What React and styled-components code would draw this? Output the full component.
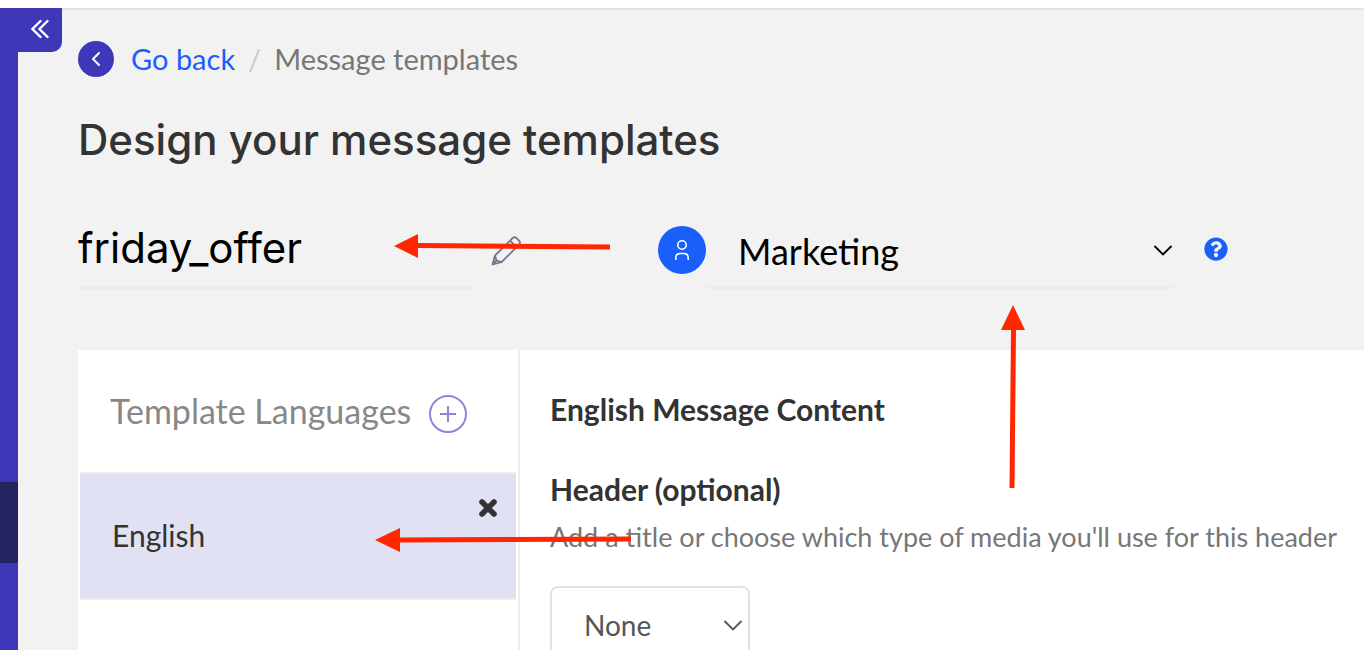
import React, { useState } from 'react';
import styled, { createGlobalStyle } from 'styled-components';
import { FaQuestionCircle } from 'react-icons/fa';

const colors = {
  indigo: '#3e38b8',
  indigoDark: '#252260',
  lavender: '#e1e1f4',
  blue: '#1a5ffa',
  grey: '#f2f2f2',
  line: '#e2e2e2',
  lineLight: '#ededed',
  text: '#333333',
  muted: '#777777',
  red: '#ff2600',
  white: '#ffffff'
};

const fonts = {
  body: 'Lato, "Liberation Sans", sans-serif',
  display: 'Inter, "Liberation Sans", sans-serif'
};

const GlobalStyle = createGlobalStyle`
  * {
    box-sizing: border-box;
  }

  body {
    margin: 0;
    font-family: ${fonts.body};
    color: ${colors.text};
    background-color: ${colors.grey};
  }
`;

const Page = styled.div`
  position: relative;
  display: flex;
  flex-direction: column;
  height: 100vh;
  overflow: hidden;
`;

const TopBar = styled.header`
  flex: none;
  height: 8px;
  background-color: ${colors.white};
`;

const Body = styled.div`
  display: flex;
  flex: 1;
  min-height: 0;
`;

const Rail = styled.nav`
  position: relative;
  flex: none;
  width: 18px;
  padding-top: 474px;
  background-color: ${colors.indigo};
`;

const RailItem = styled.a`
  display: block;
  height: 81px;
  background-color: ${colors.indigoDark};
`;

const RailToggle = styled.button`
  position: absolute;
  top: 0;
  left: 0;
  display: flex;
  align-items: center;
  justify-content: flex-end;
  width: 62px;
  height: 44px;
  padding: 0 13px 2px 0;
  border: 0;
  border-radius: 0 0 10px 0;
  background-color: ${colors.indigo};
  cursor: pointer;
`;

const Main = styled.main`
  display: flex;
  flex: 1;
  flex-direction: column;
  min-width: 0;
  padding: 31px 0 0 60px;
  border-top: 2px solid ${colors.line};
`;

const Breadcrumb = styled.nav`
  display: flex;
  align-items: center;
  height: 36px;
  font-size: 29px;
  line-height: 34px;
  color: ${colors.muted};
`;

const BackButton = styled.button`
  display: flex;
  align-items: center;
  justify-content: center;
  width: 36px;
  height: 36px;
  margin-right: 17px;
  padding: 0;
  border: 0;
  border-radius: 50%;
  background-color: ${colors.indigo};
  cursor: pointer;
`;

const BackLink = styled.a`
  color: ${colors.blue};
  text-decoration: none;
`;

const Separator = styled.span`
  margin: 0 13px;
  color: #cccccc;
`;

const Title = styled.h1`
  margin: 39px 0 62px;
  font-family: ${fonts.display};
  font-size: 42px;
  font-weight: 500;
  line-height: 48px;
`;

const Fields = styled.div`
  display: flex;
  height: 64px;
  margin-bottom: 60px;
`;

const NameInput = styled.input`
  flex: 0 1 394px;
  min-width: 0;
  padding: 0 0 18px;
  border: 0;
  border-bottom: 4px solid ${colors.lineLight};
  font-family: ${fonts.display};
  font-size: 42px;
  color: #000000;
  background: none;
  outline: none;
`;

const EditButton = styled.button`
  flex: none;
  height: 48px;
  margin: 0 136px 0 18px;
  padding: 4px 0 0;
  border: 0;
  background: none;
  cursor: pointer;
`;

const CategoryBadge = styled.span`
  display: flex;
  flex: none;
  align-items: center;
  justify-content: center;
  width: 48px;
  height: 48px;
  border-radius: 50%;
  background-color: ${colors.blue};
`;

const SelectWrapper = styled.div`
  position: relative;
  display: flex;
  width: ${props => props.$width}px;
  max-width: 100%;
  min-width: 0;

  svg {
    position: absolute;
    top: ${props => props.$chevronTop}px;
    right: ${props => props.$chevronRight}px;
    pointer-events: none;
  }
`;

const CategorySelect = styled.select`
  width: 100%;
  padding: 0 40px 10px 32px;
  border: 0;
  border-bottom: 4px solid ${colors.lineLight};
  border-radius: 8px;
  font-family: ${fonts.body};
  font-size: 36px;
  color: #000000;
  background: none;
  appearance: none;
`;

const HelpButton = styled.button`
  display: flex;
  flex: none;
  align-items: center;
  height: 46px;
  margin-left: 28px;
  padding: 0;
  border: 0;
  font-size: 24px;
  color: ${colors.blue};
  background: none;
  cursor: pointer;
`;

const Panel = styled.div`
  display: flex;
  flex: 1;
  background-color: ${colors.white};
`;

const Languages = styled.aside`
  flex: none;
  width: 442px;
  padding: 0 2px;
  border-right: 2px solid ${colors.lineLight};
`;

const LanguagesHeader = styled.div`
  display: flex;
  align-items: center;
  justify-content: space-between;
  height: 122px;
  padding: 6px 49px 0 30px;
`;

const LanguagesTitle = styled.h2`
  margin: 0;
  padding-bottom: 8px;
  font-size: 34px;
  font-weight: 400;
  color: #888888;
`;

const AddButton = styled.button`
  display: flex;
  align-items: center;
  justify-content: center;
  width: 38px;
  height: 38px;
  padding: 0;
  border: 2px solid #8b87d8;
  border-radius: 50%;
  background: none;
  cursor: pointer;
`;

const LanguageItem = styled.div`
  display: flex;
  align-items: center;
  justify-content: space-between;
  height: 128px;
  padding: 0 18px 2px 32px;
  border-top: 2px solid ${colors.lineLight};
  border-bottom: 2px solid ${colors.lineLight};
  font-size: 30px;
  background-color: ${colors.lavender};
`;

const RemoveButton = styled.button`
  align-self: flex-start;
  margin-top: 24px;
  padding: 0;
  border: 0;
  line-height: 0;
  background: none;
  cursor: pointer;
`;

const Content = styled.section`
  flex: 1;
  min-width: 0;
  padding: 39px 26px 0 30px;
`;

const ContentTitle = styled.h2`
  margin: 0 0 40px;
  font-size: 30px;
  font-weight: 700;
  line-height: 40px;
`;

const FieldLabel = styled.label`
  display: block;
  font-size: 30px;
  font-weight: 700;
  line-height: 40px;
`;

const Hint = styled.p`
  margin: 8px 0 29px;
  font-size: 27px;
  line-height: 40px;
  color: ${colors.muted};
  white-space: nowrap;
`;

const HeaderSelect = styled.select`
  width: 100%;
  height: 80px;
  padding: 0 32px 2px;
  border: 2px solid ${colors.line};
  border-radius: 8px;
  font-family: ${fonts.body};
  font-size: 28px;
  color: #555555;
  background: none;
  appearance: none;
`;

const Pointer = styled.svg`
  position: absolute;
  top: ${props => props.$top}px;
  left: ${props => props.$left}px;
  fill: ${colors.red};
  pointer-events: none;
`;

const Chevron = ({ color }) => (
  <svg width="18" height="12" viewBox="0 0 18 12" fill="none" stroke={color}>
    <path d="M1 1.5 9 9.5l8-8" strokeWidth="1.8" strokeLinecap="round" />
  </svg>
);

const App = () => {
  const [name, setName] = useState('friday_offer');

  return (
    <Page>
      <GlobalStyle />
      <TopBar />
      <Body>
        <Rail>
          <RailItem href="#templates" aria-label="Templates" />
          <RailToggle aria-label="Collapse menu">
            <svg width="18" height="20" viewBox="0 0 18 20" fill="none">
              <path
                d="M9.5 2 1.5 10l8 8M16.5 2l-8 8 8 8"
                stroke={colors.white}
                strokeWidth="2.4"
                strokeLinecap="round"
              />
            </svg>
          </RailToggle>
        </Rail>
        <Main>
          <Breadcrumb>
            <BackButton aria-label="Back">
              <svg width="10" height="16" viewBox="0 0 10 16" fill="none">
                <path
                  d="M8 2 2 8l6 6"
                  stroke={colors.white}
                  strokeWidth="2"
                  strokeLinecap="round"
                  strokeLinejoin="round"
                />
              </svg>
            </BackButton>
            <BackLink href="#back">Go back</BackLink>
            <Separator>/</Separator>
            <span>Message templates</span>
          </Breadcrumb>
          <Title>Design your message templates</Title>
          <Fields>
            <NameInput
              aria-label="Template name"
              value={name}
              onChange={e => setName(e.target.value)}
            />
            <EditButton aria-label="Edit name">
              <svg width="32" height="32" viewBox="0 0 32 32" fill="none">
                <path
                  d="M2.5 29.5 5 20.5 22.5 3.2Q24.5 1.2 26.6 3.2L29 5.6Q31 7.7 29 9.7L11.5 27.2ZM5 20.5 6.5 25.5 11.5 27.2M2.5 29.5 6.5 25.5M20 5.7 26.5 12.2"
                  stroke="#77758a"
                  strokeWidth="1.8"
                  strokeLinejoin="round"
                />
              </svg>
            </EditButton>
            <CategoryBadge>
              <svg width="16" height="24" viewBox="0 0 16 24" fill="none">
                <g stroke={colors.white} strokeWidth="1.6">
                  <circle cx="8" cy="7" r="4.2" />
                  <path d="M1.8 22v-2q0-4.5 4.5-4.5h3.4q4.5 0 4.5 4.5v2" />
                </g>
              </svg>
            </CategoryBadge>
            <SelectWrapper $width={470} $chevronTop={19} $chevronRight={4}>
              <CategorySelect aria-label="Category">
                <option>Marketing</option>
              </CategorySelect>
              <Chevron color="#000000" />
            </SelectWrapper>
            <HelpButton aria-label="Help">
              <FaQuestionCircle />
            </HelpButton>
          </Fields>
          <Panel>
            <Languages>
              <LanguagesHeader>
                <LanguagesTitle>Template Languages</LanguagesTitle>
                <AddButton aria-label="Add language">
                  <svg width="16" height="16" viewBox="0 0 16 16">
                    <path d="M8 0v16M0 8h16" stroke="#8b87d8" strokeWidth="2" />
                  </svg>
                </AddButton>
              </LanguagesHeader>
              <LanguageItem>
                <span>English</span>
                <RemoveButton aria-label="Remove English">
                  <svg width="20" height="20" viewBox="0 0 20 20">
                    <path
                      d="m4 4 12 12M16 4 4 16"
                      stroke={colors.text}
                      strokeWidth="5.6"
                      strokeLinecap="round"
                    />
                  </svg>
                </RemoveButton>
              </LanguageItem>
            </Languages>
            <Content>
              <ContentTitle>English Message Content</ContentTitle>
              <FieldLabel htmlFor="header-type">Header (optional)</FieldLabel>
              <Hint>
                Add a title or choose which type of media you'll use for this
                header
              </Hint>
              <SelectWrapper $width={200} $chevronTop={34} $chevronRight={8}>
                <HeaderSelect id="header-type">
                  <option>None</option>
                </HeaderSelect>
                <Chevron color="#555555" />
              </SelectWrapper>
            </Content>
          </Panel>
        </Main>
      </Body>
      <Pointer $top={234} $left={394} width="218" height="26">
        <path d="M0 12 24 0V9L216 10.5V15.5L24 14V24Z" />
      </Pointer>
      <Pointer $top={305} $left={1000} width="26" height="184">
        <path d="M13 0 25 25H16L14.5 183H9.5L11 25H1Z" />
      </Pointer>
      <Pointer $top={527} $left={375} width="258" height="26">
        <path d="M0 13 25 1V10.5L256 9.5V14.5L25 15.5V25Z" />
      </Pointer>
    </Page>
  );
};

export default App;
